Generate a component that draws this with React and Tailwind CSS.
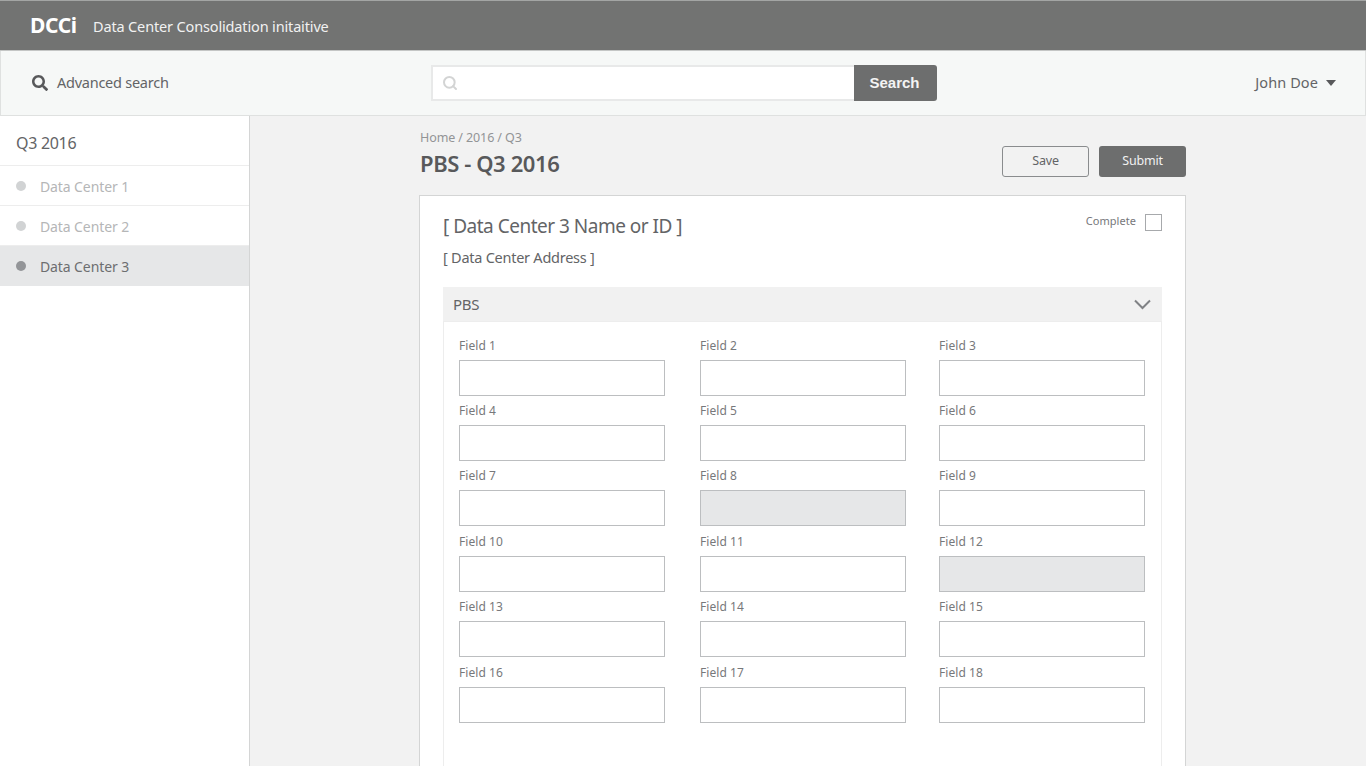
import React from "react";
import { FaSearch } from "react-icons/fa";
import { FiSearch } from "react-icons/fi";

const font = "font-['Noto_Sans','Open_Sans',sans-serif]";

const centers = [
  { name: "Data Center 1", active: false },
  { name: "Data Center 2", active: false },
  { name: "Data Center 3", active: true },
];

const disabled = [8, 12];
const fields = Array.from({ length: 18 }, (_, i) => i + 1);

export default function App() {
  return (
    <div className={`${font} flex h-[766px] flex-col overflow-hidden bg-[#f2f2f2] text-[#636466]`}>
      {/* Top bar */}
      <header className="flex h-[51px] shrink-0 items-center border-t border-b border-t-[#a3a5a4] border-b-[#c4c6c5] bg-[#727372] pb-[1px] pl-[30px] text-white">
        <span className="w-[63px] text-[21px] leading-none font-bold tracking-[-0.4px]">DCCi</span>
        <span className="pt-[4px] text-[14.5px] tracking-[-0.15px] text-[#f1f1f1]">Data Center Consolidation initaitive</span>
      </header>

      {/* Search bar */}
      <div className="flex h-[65px] shrink-0 items-center border border-t-0 border-[#dfe1e0] bg-[#f6f8f7]">
        <div className="flex w-[430px] items-center pl-[31px]">
          <FaSearch className="mr-[9px] h-[16px] w-[16px] text-[#58595b]" />
          <span className="text-[14.5px] tracking-[-0.25px]">Advanced search</span>
        </div>
        <div className="flex h-[36px] w-[506px] items-stretch">
          <div className="flex flex-1 items-center border-2 border-r-0 border-[#e8e9e9] bg-white pl-[9px]">
            <FiSearch className="h-[16px] w-[16px] text-[#d3d4d4]" strokeWidth={3} />
          </div>
          <button className="w-[83px] rounded-r-[3px] bg-[#6d6e6e] pr-[2px] font-['Liberation_Sans',sans-serif] text-[15px] font-bold text-[#f4f4f4]">
            Search
          </button>
        </div>
        <div className="ml-auto flex items-center pr-[29px]">
          <span className="text-[14.5px] tracking-[0.1px]">John Doe</span>
          <span className="ml-[8px] h-0 w-0 border-x-[5.5px] border-t-[6px] border-x-transparent border-t-[#58595b]" />
        </div>
      </div>

      <div className="flex min-h-0 flex-1">
        {/* Sidebar */}
        <aside className="w-[250px] shrink-0 border-r border-[#d4d5d5] bg-white">
          <div className="flex h-[50px] items-center border-b border-[#ededed] pt-[5px] pl-4 text-[16px] tracking-[-0.3px]">Q3 2016</div>
          {centers.map((c) => (
            <div
              key={c.name}
              className={`flex h-10 items-center pl-4 text-[14px] tracking-[-0.1px] ${c.active ? "bg-[#e6e7e8] text-[#6d6e70]" : "border-b border-[#ededed] pt-[1px] text-[#b5b6b7]"}`}
            >
              <span className={`mr-[14px] mb-[1px] h-[10px] w-[10px] rounded-full ${c.active ? "bg-[#939598]" : "bg-[#d1d3d4]"}`} />
              {c.name}
            </div>
          ))}
        </aside>

        {/* Main */}
        <main className="flex-1 pl-[170px]">
          <div className="w-[766px]">
            <div className="pt-[13px] text-[12.5px] leading-[17px] tracking-[-0.1px] text-[#929496]">Home / 2016 / Q3</div>
            <div className="flex h-[49px] items-start justify-between">
              <h1 className="pt-[2px] text-[22px] leading-[30px] font-semibold tracking-[-0.4px] text-[#58595b]">PBS - Q3 2016</h1>
              <div className="flex gap-[10px]">
                <button className="h-[31px] w-[87px] rounded-[3px] border border-[#8a8c8e] text-[12.5px] tracking-[-0.2px]">Save</button>
                <button className="h-[31px] w-[87px] rounded-[3px] bg-[#6d6e6e] text-[12.5px] tracking-[-0.2px] text-[#f1f1f1]">Submit</button>
              </div>
            </div>

            {/* Card */}
            <section className="-ml-px h-[700px] w-[767px] border border-[#d4d5d5] bg-white px-[23px]">
              <div className="flex h-[91px] items-start justify-between">
                <div>
                  <div className="pt-[16px] text-[19px] leading-[28px] tracking-[-0.5px]">[ Data Center 3 Name or ID ]</div>
                  <div className="pt-[7px] text-[14.5px] leading-[20px] tracking-[-0.25px]">[ Data Center Address ]</div>
                </div>
                <div className="flex items-center pt-[17px]">
                  <span className="mr-[9px] pb-[2px] text-[11px] tracking-[0.05px] text-[#77787b]">Complete</span>
                  <span className="h-[17px] w-[17px] border border-[#a7a9ac] bg-white" />
                </div>
              </div>

              {/* Panel */}
              <div className="h-[600px] border-x border-[#ededed]">
                <div className="-mx-px flex h-[35px] items-center justify-between border-b border-[#ededed] bg-[#f1f1f1] pr-[11px] pl-[10px] text-[15px] tracking-[-0.25px]">
                  PBS
                  <svg width="17" height="11" viewBox="0 0 17 11" fill="none" stroke="#808285" strokeWidth="2">
                    <path d="M1 1.5l7.5 7.5 7.5-7.5" />
                  </svg>
                </div>
                <div className="grid grid-cols-[241px_239px_206px] pt-[13.6px] pl-[15px]">
                  {fields.map((n) => (
                    <div key={n} className="h-[65.4px]">
                      <div className="h-[24px] text-[12px] leading-[19px] tracking-[0.05px] text-[#77787b]">Field {n}</div>
                      <div className={`h-[36px] w-[206px] border border-[#bcbec0] ${disabled.includes(n) ? "bg-[#e6e7e8]" : "bg-white"}`} />
                    </div>
                  ))}
                </div>
              </div>
            </section>
          </div>
        </main>
      </div>
    </div>
  );
}
